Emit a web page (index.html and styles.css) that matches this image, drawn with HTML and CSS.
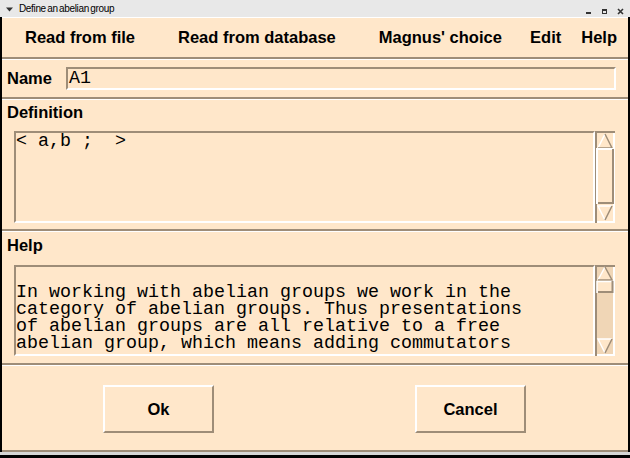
FILE: index.html
```html
<!DOCTYPE html>
<html>
<head>
<meta charset="utf-8">
<title>Define an abelian group</title>
<link rel="stylesheet" href="styles.css">
</head>
<body>
<div class="window">
  <div class="titlebar">
    <svg class="tb-menu" width="7" height="5" viewBox="0 0 7 5"><path d="M0 0.5H7L3.5 4.5Z" fill="#333"/></svg>
    <span class="title">Define an abelian group</span>
    <svg class="tb-btns" width="46" height="17" viewBox="0 0 46 17">
      <rect x="2" y="12" width="5" height="2" fill="#333"/>
      <rect x="18.5" y="9.5" width="4" height="4" fill="none" stroke="#333" stroke-width="1"/>
      <rect x="18" y="9" width="5" height="2" fill="#333"/>
      <path d="M34 9L39 14M39 9L34 14" stroke="#333" stroke-width="1.6"/>
    </svg>
  </div>
  <div class="frame">
    <div class="section menubar">
      <span class="menu-item">Read from file</span>
      <span class="menu-item">Read from database</span>
      <span class="menu-item mid">Magnus' choice</span>
      <div class="menu-right">
        <span class="menu-item edit">Edit</span>
        <span class="menu-item help-item">Help</span>
      </div>
    </div>
    <div class="section name-row">
      <span class="label name-label">Name</span>
      <div class="entry">A1</div>
    </div>
    <div class="section def">
      <div class="label def-label">Definition</div>
      <div class="textrow def-row">
        <div class="textbox">&lt; a,b ;  &gt;</div>
        <svg class="sb" width="20" height="92" viewBox="0 0 20 92">
          <rect width="20" height="92" fill="#ffe7ca"/>
          <path d="M0 0H20V2H2V92H0Z" fill="#9e8d78"/>
          <path d="M20 2V92H2V90H18V2Z" fill="#ffffff"/>
          <path d="M10 3L3 17H17Z" fill="#ffe7ca"/>
          <path d="M3 17L10 3" stroke="#ffffff" stroke-width="1.5" fill="none"/>
          <path d="M10 3L17 17H3" stroke="#9e8d78" stroke-width="1.5" fill="none"/>
          <rect x="2" y="18" width="16" height="55" fill="#ffe7ca"/>
          <path d="M2 73V18H18" stroke="#ffffff" stroke-width="2" fill="none"/>
          <path d="M18 18V72H3" stroke="#9e8d78" stroke-width="2" fill="none"/>
          <path d="M3 75H17L10 89Z" fill="#ffe7ca"/>
          <path d="M10 89L3 75H17" stroke="#ffffff" stroke-width="1.5" fill="none"/>
          <path d="M17 75L10 89" stroke="#9e8d78" stroke-width="1.5" fill="none"/>
        </svg>
      </div>
    </div>
    <div class="section help">
      <div class="label help-label">Help</div>
      <div class="textrow help-row">
        <div class="textbox">
In working with abelian groups we work in the
category of abelian groups. Thus presentations
of abelian groups are all relative to a free
abelian group, which means adding commutators</div>
        <svg class="sb" width="20" height="91" viewBox="0 0 20 91">
          <rect width="20" height="91" fill="#f0d6b6"/>
          <path d="M0 0H20V2H2V91H0Z" fill="#9e8d78"/>
          <path d="M20 2V91H2V89H18V2Z" fill="#ffffff"/>
          <path d="M10 2L3 15H17Z" fill="#ffe7ca"/>
          <path d="M3 15L10 2" stroke="#ffffff" stroke-width="1.5" fill="none"/>
          <path d="M10 2L17 15H3" stroke="#9e8d78" stroke-width="1.5" fill="none"/>
          <rect x="2" y="16" width="16" height="12" fill="#ffe7ca"/>
          <path d="M2 28V16.5H18" stroke="#ffffff" stroke-width="1.5" fill="none"/>
          <path d="M17.5 16V27H3" stroke="#9e8d78" stroke-width="2" fill="none"/>
          <path d="M3 74H17L10 88Z" fill="#ffe7ca"/>
          <path d="M10 88L3 74H17" stroke="#ffffff" stroke-width="1.5" fill="none"/>
          <path d="M17 74L10 88" stroke="#9e8d78" stroke-width="1.5" fill="none"/>
        </svg>
      </div>
    </div>
    <div class="section buttons">
      <div class="btn">Ok</div>
      <div class="btn">Cancel</div>
    </div>
  </div>
  <div class="bottom-edge"></div>
</div>
</body>
</html>
```
FILE: styles.css
```css
* {
  box-sizing: border-box;
  margin: 0;
  padding: 0;
}

html, body {
  width: 630px;
  height: 458px;
  overflow: hidden;
}

body {
  background: #000;
  font-family: "Liberation Sans", Arial, sans-serif;
  color: #000;
}

.window {
  width: 630px;
  height: 458px;
  display: flex;
  flex-direction: column;
  background: #000;
}

.titlebar {
  height: 17px;
  flex: none;
  background: #e8e8e8;
  display: flex;
  align-items: center;
  padding-left: 6px;
}

.tb-menu {
  margin-right: 6px;
  margin-top: 1px;
}

.title {
  font-size: 10px;
  letter-spacing: -0.35px;
  word-spacing: -1px;
  line-height: 17px;
}

.tb-btns {
  margin-left: auto;
  display: block;
}

.frame {
  height: 435px;
  flex: none;
  border-left: 2px solid #000;
  border-right: 2px solid #000;
  background: #ffe7ca;
  display: flex;
  flex-direction: column;
}

.section {
  border-top: 1px solid #fff;
  border-bottom: 2px solid #9e8d78;
  flex: none;
}

.menubar {
  height: 42px;
  display: flex;
  align-items: center;
}

.menu-item {
  font-size: 16.5px;
  font-weight: bold;
  padding: 0 21.5px;
  white-space: nowrap;
  flex: none;
}

.menu-item:first-child {
  padding-left: 23px;
}

.menu-item.mid {
  padding-right: 4px;
}

.menu-right {
  margin-left: auto;
  display: flex;
  flex: none;
}

.menu-item.edit {
  padding: 0 10px 0 4px;
}

.menu-item.help-item {
  padding: 0 11px 0 10px;
}

.label {
  font-size: 16.5px;
  font-weight: bold;
  padding-left: 5px;
}

.name-row {
  height: 40px;
  display: flex;
  align-items: center;
}

.name-label {
  width: 64px;
}

.entry {
  width: 550px;
  height: 23px;
  border-top: 2px solid #9e8d78;
  border-left: 2px solid #9e8d78;
  border-bottom: 2px solid #fff;
  border-right: 2px solid #fff;
  font-family: "Liberation Mono", "Courier New", monospace;
  font-size: 18.33px;
  line-height: 19px;
  padding-left: 1px;
  white-space: pre;
}

.def {
  height: 132px;
}

.def-label {
  line-height: 24px;
  height: 24px;
}

.help {
  height: 134px;
}

.help-label {
  line-height: 26px;
  height: 26px;
}

.textrow {
  display: flex;
  margin-top: 7px;
  padding-left: 12px;
}

.def-row {
  height: 92px;
}

.help-row {
  height: 91px;
}

.textbox {
  width: 581px;
  height: 100%;
  border-top: 2px solid #9e8d78;
  border-left: 2px solid #9e8d78;
  border-bottom: 2px solid #fff;
  border-right: 2px solid #fff;
  font-family: "Liberation Mono", "Courier New", monospace;
  font-size: 18.33px;
  line-height: 17px;
  white-space: pre;
  overflow: hidden;
}

.sb {
  display: block;
  flex: none;
}

.buttons {
  height: 87px;
  display: flex;
  align-items: flex-start;
  padding-top: 19px;
  padding-left: 101px;
  gap: 201px;
}

.btn {
  width: 111px;
  height: 48px;
  border-top: 2px solid #fff;
  border-left: 2px solid #fff;
  border-bottom: 2px solid #9e8d78;
  border-right: 2px solid #9e8d78;
  display: flex;
  align-items: center;
  justify-content: center;
  font-size: 16.5px;
  font-weight: bold;
}

.bottom-edge {
  height: 3px;
  flex: none;
  background: #d6d6d6;
}
```
